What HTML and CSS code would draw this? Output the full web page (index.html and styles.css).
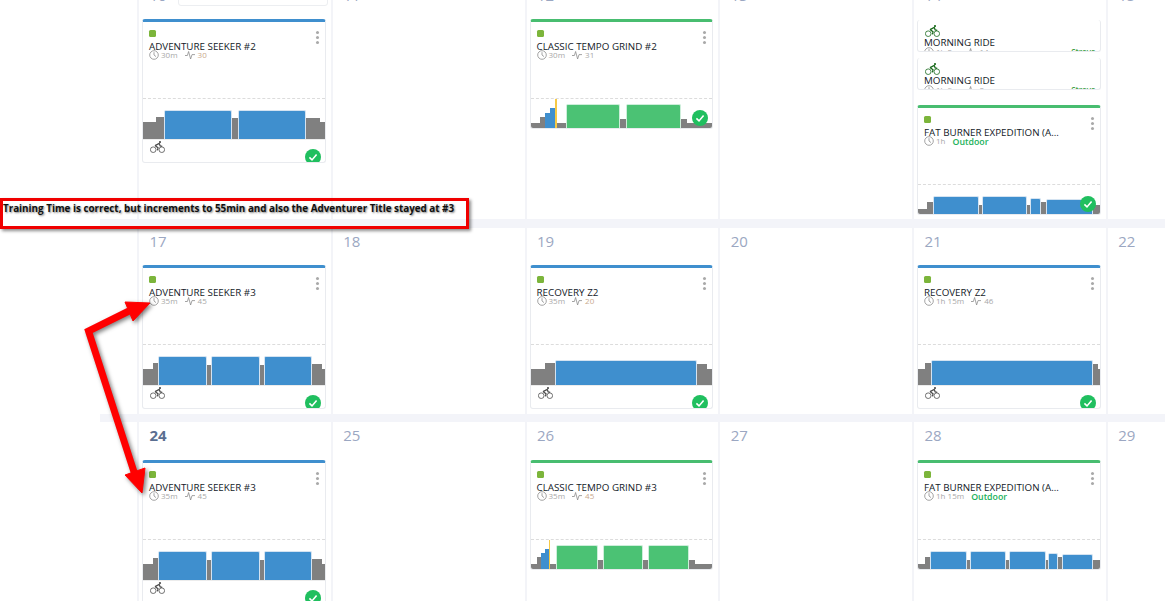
FILE: index.html
```html
<!DOCTYPE html>
<html lang="en">
<head>
    <meta charset="UTF-8">
    <meta name="viewport" content="width=device-width, initial-scale=1.0">
    <title>Training Calendar</title>
    <link rel="stylesheet" href="styles.css">
</head>
<body>
    <svg class="sprite" width="0" height="0">
        <symbol id="clock" viewBox="0 0 10 10">
            <circle cx="5" cy="5" r="4.3" fill="none" stroke="currentColor" stroke-width="0.8"/>
            <path d="M5 2.2V5L7 6.6" fill="none" stroke="currentColor" stroke-width="0.8"/>
        </symbol>
        <symbol id="pulse" viewBox="0 0 10 10">
            <path d="M0 5.5H2.4L3.6 1.5L5.6 9L7 4.6H10" fill="none" stroke="currentColor" stroke-width="0.8"/>
        </symbol>
        <symbol id="bike" viewBox="0 0 15 12">
            <circle cx="3.2" cy="8.7" r="2.8" fill="none" stroke="currentColor" stroke-width="0.8"/>
            <circle cx="11.8" cy="8.7" r="2.8" fill="none" stroke="currentColor" stroke-width="0.8"/>
            <circle cx="10" cy="1.1" r="1.1" fill="currentColor"/>
            <path d="M5 4.6L9.2 2.4L10.2 5L12.2 5.4M5 4.6L8 6.8L7.4 9.4" fill="none" stroke="currentColor" stroke-width="1.3"/>
        </symbol>
        <symbol id="check" viewBox="0 0 16 16">
            <path d="M4.4 8.4L7 10.9L11.6 5.6" fill="none" stroke="#fff" stroke-width="1.6"/>
        </symbol>
    </svg>

    <div class="calendar">
        <!-- week 10-16, scrolled off the top -->
        <div class="week week-first">
            <div class="day">
                <div class="day-head"><span class="date">10</span><div class="slot"></div></div>
                <div class="card card-blue">
                    <span class="dot"></span><span class="kebab"><i></i><i></i><i></i></span>
                    <div class="card-title">Adventure Seeker #2</div>
                    <div class="meta"><svg class="ico"><use href="#clock"/></svg><span class="time">30m</span><svg class="ico"><use href="#pulse"/></svg><span class="tss warm">30</span></div>
                    <div class="chart chart-tall">
                        <b class="bar grey" style="flex:13;height:17px"></b>
                        <b class="bar grey" style="flex:9;height:22px"></b>
                        <b class="bar blue" style="flex:68;height:29px"></b>
                        <b class="bar grey" style="flex:6;height:21px"></b>
                        <b class="bar blue" style="flex:68;height:29px"></b>
                        <b class="bar grey" style="flex:14;height:21px"></b>
                        <b class="bar grey" style="flex:5;height:17px"></b>
                    </div>
                    <svg class="bike"><use href="#bike"/></svg>
                    <span class="done done-low"><svg><use href="#check"/></svg></span>
                </div>
            </div>
            <div class="day"><div class="day-head"><span class="date">11</span></div></div>
            <div class="day">
                <div class="day-head"><span class="date">12</span></div>
                <div class="card card-green">
                    <span class="dot"></span><span class="kebab"><i></i><i></i><i></i></span>
                    <div class="card-title">Classic Tempo Grind #2</div>
                    <div class="meta"><svg class="ico"><use href="#clock"/></svg><span class="time">30m</span><svg class="ico"><use href="#pulse"/></svg><span class="tss">31</span></div>
                    <div class="chart">
                        <b class="bar grey" style="flex:10;height:5px"></b>
                        <b class="bar grey" style="flex:5;height:11px"></b>
                        <b class="bar plain-blue" style="flex:5;height:15px"></b>
                        <b class="bar plain-blue" style="flex:5;height:20px"></b>
                        <b class="bar yellow" style="flex:2;height:29px"></b>
                        <b class="bar grey" style="flex:9;height:5px"></b>
                        <b class="bar green" style="flex:54;height:24px"></b>
                        <b class="bar grey" style="flex:6;height:9px"></b>
                        <b class="bar green" style="flex:54;height:24px"></b>
                        <b class="bar grey" style="flex:6;height:9px"></b>
                        <b class="bar grey" style="flex:26;height:5px"></b>
                    </div>
                    <span class="done"><svg><use href="#check"/></svg></span>
                </div>
            </div>
            <div class="day"><div class="day-head"><span class="date">13</span></div></div>
            <div class="day">
                <div class="day-head day-head-tight"><span class="date">14</span></div>
                <div class="ride">
                    <svg class="bike bike-green"><use href="#bike"/></svg>
                    <div class="ride-title">Morning Ride</div>
                    <div class="meta"><svg class="ico"><use href="#clock"/></svg><span class="time">1h 2m</span><svg class="ico"><use href="#pulse"/></svg><span class="tss">14</span><span class="strava">Strava</span></div>
                </div>
                <div class="ride">
                    <svg class="bike bike-green"><use href="#bike"/></svg>
                    <div class="ride-title">Morning Ride</div>
                    <div class="meta"><svg class="ico"><use href="#clock"/></svg><span class="time">1h 9m</span><svg class="ico"><use href="#pulse"/></svg><span class="tss">0</span><span class="strava">Strava</span></div>
                </div>
                <div class="card card-green card-after-rides">
                    <span class="dot"></span><span class="kebab"><i></i><i></i><i></i></span>
                    <div class="card-title">Fat Burner Expedition (A...</div>
                    <div class="meta"><svg class="ico"><use href="#clock"/></svg><span class="time">1h</span><span class="outdoor">Outdoor</span></div>
                    <div class="chart">
                        <b class="bar grey" style="flex:9;height:5px"></b>
                        <b class="bar grey" style="flex:7;height:12px"></b>
                        <b class="bar blue" style="flex:46;height:18px"></b>
                        <b class="bar grey" style="flex:3;height:9px"></b>
                        <b class="bar blue" style="flex:46;height:18px"></b>
                        <b class="bar grey" style="flex:3;height:9px"></b>
                        <b class="bar blue" style="flex:9;height:16px"></b>
                        <b class="bar grey" style="flex:6;height:12px"></b>
                        <b class="bar blue" style="flex:47;height:15px"></b>
                        <b class="bar grey" style="flex:7;height:9px"></b>
                    </div>
                    <span class="done"><svg><use href="#check"/></svg></span>
                </div>
            </div>
            <div class="day"><div class="day-head"><span class="date">15</span></div></div>
        </div>

        <!-- week 17-22 -->
        <div class="week week-mid">
            <div class="day">
                <div class="day-head"><span class="date">17</span></div>
                <div class="card card-blue">
                    <span class="dot"></span><span class="kebab"><i></i><i></i><i></i></span>
                    <div class="card-title">Adventure Seeker #3</div>
                    <div class="meta"><svg class="ico"><use href="#clock"/></svg><span class="time">35m</span><svg class="ico"><use href="#pulse"/></svg><span class="tss">45</span></div>
                    <div class="chart chart-tall">
                        <b class="bar grey" style="flex:10;height:16px"></b>
                        <b class="bar grey" style="flex:6;height:22px"></b>
                        <b class="bar blue" style="flex:49;height:29px"></b>
                        <b class="bar grey" style="flex:4;height:20px"></b>
                        <b class="bar blue" style="flex:49;height:29px"></b>
                        <b class="bar grey" style="flex:4;height:20px"></b>
                        <b class="bar blue" style="flex:49;height:29px"></b>
                        <b class="bar grey" style="flex:10;height:21px"></b>
                        <b class="bar grey" style="flex:3;height:16px"></b>
                    </div>
                    <svg class="bike"><use href="#bike"/></svg>
                    <span class="done done-low"><svg><use href="#check"/></svg></span>
                </div>
            </div>
            <div class="day"><div class="day-head"><span class="date">18</span></div></div>
            <div class="day">
                <div class="day-head"><span class="date">19</span></div>
                <div class="card card-blue">
                    <span class="dot"></span><span class="kebab"><i></i><i></i><i></i></span>
                    <div class="card-title">Recovery Z2</div>
                    <div class="meta"><svg class="ico"><use href="#clock"/></svg><span class="time">35m</span><svg class="ico"><use href="#pulse"/></svg><span class="tss warm">20</span></div>
                    <div class="chart chart-tall">
                        <b class="bar grey" style="flex:15;height:16px"></b>
                        <b class="bar grey" style="flex:10;height:22px"></b>
                        <b class="bar blue" style="flex:142;height:25px"></b>
                        <b class="bar grey" style="flex:10;height:21px"></b>
                        <b class="bar grey" style="flex:5;height:16px"></b>
                    </div>
                    <svg class="bike"><use href="#bike"/></svg>
                    <span class="done done-low"><svg><use href="#check"/></svg></span>
                </div>
            </div>
            <div class="day"><div class="day-head"><span class="date">20</span></div></div>
            <div class="day">
                <div class="day-head"><span class="date">21</span></div>
                <div class="card card-blue">
                    <span class="dot"></span><span class="kebab"><i></i><i></i><i></i></span>
                    <div class="card-title">Recovery Z2</div>
                    <div class="meta"><svg class="ico"><use href="#clock"/></svg><span class="time">1h 15m</span><svg class="ico"><use href="#pulse"/></svg><span class="tss">46</span></div>
                    <div class="chart chart-tall">
                        <b class="bar grey" style="flex:7;height:16px"></b>
                        <b class="bar grey" style="flex:6;height:22px"></b>
                        <b class="bar blue" style="flex:163;height:25px"></b>
                        <b class="bar grey" style="flex:5;height:21px"></b>
                        <b class="bar grey" style="flex:2;height:16px"></b>
                    </div>
                    <svg class="bike"><use href="#bike"/></svg>
                    <span class="done done-low"><svg><use href="#check"/></svg></span>
                </div>
            </div>
            <div class="day"><div class="day-head"><span class="date">22</span></div></div>
        </div>

        <!-- week 24-29 -->
        <div class="week week-last">
            <div class="day">
                <div class="day-head"><span class="date date-today">24</span></div>
                <div class="card card-blue">
                    <span class="dot"></span><span class="kebab"><i></i><i></i><i></i></span>
                    <div class="card-title">Adventure Seeker #3</div>
                    <div class="meta"><svg class="ico"><use href="#clock"/></svg><span class="time">35m</span><svg class="ico"><use href="#pulse"/></svg><span class="tss">45</span></div>
                    <div class="chart chart-tall">
                        <b class="bar grey" style="flex:10;height:16px"></b>
                        <b class="bar grey" style="flex:6;height:22px"></b>
                        <b class="bar blue" style="flex:49;height:29px"></b>
                        <b class="bar grey" style="flex:4;height:20px"></b>
                        <b class="bar blue" style="flex:49;height:29px"></b>
                        <b class="bar grey" style="flex:4;height:20px"></b>
                        <b class="bar blue" style="flex:49;height:29px"></b>
                        <b class="bar grey" style="flex:10;height:21px"></b>
                        <b class="bar grey" style="flex:3;height:16px"></b>
                    </div>
                    <svg class="bike"><use href="#bike"/></svg>
                    <span class="done done-low"><svg><use href="#check"/></svg></span>
                </div>
            </div>
            <div class="day"><div class="day-head"><span class="date">25</span></div></div>
            <div class="day">
                <div class="day-head"><span class="date">26</span></div>
                <div class="card card-green">
                    <span class="dot"></span><span class="kebab"><i></i><i></i><i></i></span>
                    <div class="card-title">Classic Tempo Grind #3</div>
                    <div class="meta"><svg class="ico"><use href="#clock"/></svg><span class="time">35m</span><svg class="ico"><use href="#pulse"/></svg><span class="tss warm">45</span></div>
                    <div class="chart">
                        <b class="bar grey" style="flex:7;height:5px"></b>
                        <b class="bar grey" style="flex:4;height:12px"></b>
                        <b class="bar plain-blue" style="flex:4;height:16px"></b>
                        <b class="bar plain-blue" style="flex:4;height:20px"></b>
                        <b class="bar yellow" style="flex:1;height:29px"></b>
                        <b class="bar grey" style="flex:7;height:5px"></b>
                        <b class="bar green" style="flex:41;height:24px"></b>
                        <b class="bar grey" style="flex:5;height:9px"></b>
                        <b class="bar green" style="flex:40;height:24px"></b>
                        <b class="bar grey" style="flex:5;height:9px"></b>
                        <b class="bar green" style="flex:41;height:24px"></b>
                        <b class="bar grey" style="flex:6;height:9px"></b>
                        <b class="bar grey" style="flex:18;height:5px"></b>
                    </div>
                </div>
            </div>
            <div class="day"><div class="day-head"><span class="date">27</span></div></div>
            <div class="day">
                <div class="day-head"><span class="date">28</span></div>
                <div class="card card-green">
                    <span class="dot"></span><span class="kebab"><i></i><i></i><i></i></span>
                    <div class="card-title">Fat Burner Expedition (A...</div>
                    <div class="meta"><svg class="ico"><use href="#clock"/></svg><span class="time">1h 15m</span><span class="outdoor">Outdoor</span></div>
                    <div class="chart">
                        <b class="bar grey" style="flex:7;height:5px"></b>
                        <b class="bar grey" style="flex:6;height:12px"></b>
                        <b class="bar blue" style="flex:37;height:18px"></b>
                        <b class="bar grey" style="flex:3;height:9px"></b>
                        <b class="bar blue" style="flex:37;height:18px"></b>
                        <b class="bar grey" style="flex:3;height:9px"></b>
                        <b class="bar blue" style="flex:37;height:18px"></b>
                        <b class="bar grey" style="flex:2;height:9px"></b>
                        <b class="bar blue" style="flex:9;height:16px"></b>
                        <b class="bar grey" style="flex:4;height:12px"></b>
                        <b class="bar blue" style="flex:31;height:15px"></b>
                        <b class="bar grey" style="flex:7;height:9px"></b>
                    </div>
                </div>
            </div>
            <div class="day"><div class="day-head"><span class="date">29</span></div></div>
        </div>
    </div>

    <!-- annotations drawn over the screenshot -->
    <div class="callout">Training Time is correct, but increments to 55min and also the Adventurer Title stayed at #3</div>
    <svg class="arrows" width="200" height="220" viewBox="0 0 200 220">
        <path d="M79 11L38.5 31L85 175" fill="none" stroke="#f00" stroke-width="7" stroke-linejoin="miter" stroke-miterlimit="10"/>
        <path d="M100 3L75 2L83 21Z M92 193L75 175L95 168Z" fill="#f00" stroke="#f00" stroke-width="1"/>
    </svg>
</body>
</html>
```

FILE: styles.css
```css
html, body {
    height: 100%;
}
body {
    font-family: "Open Sans", Arial, sans-serif;
    background-color: #fff;
    margin: 0;
    overflow: hidden;
    position: relative;
}
.sprite {
    position: absolute;
}

/* calendar grid */
.calendar {
    background-color: #f3f4f9;
    margin: -18px 0 0 100px;
    height: 640px;
}
.week {
    display: grid;
    grid-template-columns: repeat(5, 193.75px) 1fr;
    background-color: #fff;
    padding-left: 37px;
    height: 220px;
}
.week-first {
    height: 237px;
    margin-bottom: 9px;
}
.week-mid {
    height: 186px;
    margin-bottom: 8px;
}
.day {
    border-left: 2px solid #f3f4f8;
    padding: 0 5px 0 3px;
    min-width: 0;
}
.day-head {
    display: flex;
    justify-content: space-between;
    align-items: flex-start;
    height: 37px;
    padding-left: 7.5px;
}
.day-head-tight, .week-last .day-head {
    height: 38px;
}
.date {
    font-size: 15px;
    line-height: 26px;
    color: #9ba7c2;
}
.date-today {
    font-weight: 700;
    color: #5b6f91;
}
.slot {
    width: 150px;
    height: 24px;
    box-sizing: border-box;
    border: 1px solid #eceef1;
    border-radius: 3px;
    margin-right: -2px;
}

/* workout card */
.card {
    position: relative;
    box-sizing: border-box;
    background-color: #fff;
    border: 1px solid #e9ebef;
    border-top: 3px solid #3f8fce;
    border-radius: 3px;
    overflow: hidden;
    padding-top: 76px;
}
.card-green {
    border-top-color: #48bd70;
}
.card-after-rides {
    margin-top: 15px;
}
.dot {
    position: absolute;
    top: 8px;
    left: 6px;
    width: 7px;
    height: 7px;
    border-radius: 1.5px;
    background-color: #7cb53b;
}
.kebab {
    position: absolute;
    top: 9px;
    right: 6px;
    display: flex;
    flex-direction: column;
    gap: 2px;
}
.kebab i {
    width: 3px;
    height: 3px;
    border-radius: 50%;
    background-color: #a9a9a9;
}
.card-title {
    position: absolute;
    top: 19px;
    left: 6px;
    font-size: 9.8px;
    line-height: 12px;
    text-transform: uppercase;
    color: #141a28;
    white-space: nowrap;
}
.meta {
    position: absolute;
    top: 28px;
    left: 6px;
    right: 4px;
    display: flex;
    align-items: center;
    height: 10px;
    font-size: 8px;
    line-height: 10px;
    color: #a8a8a8;
}
.ico {
    width: 10px;
    height: 10px;
    color: #8d8d8d;
    flex: none;
}
.time {
    margin: 0 7px 0 2px;
}
.tss {
    margin-left: 3px;
}
.warm {
    color: #c9a98c;
}
.outdoor {
    margin: 2px 0 0 0;
    font-size: 8.8px;
    font-weight: 600;
    color: #21b15a;
}
.strava {
    margin-left: auto;
    font-weight: 600;
    color: #43a047;
}

/* interval chart */
.chart {
    display: flex;
    align-items: flex-end;
    height: 29px;
    border-top: 1px dashed #dcdcdc;
}
.chart-tall {
    height: 40px;
    border-bottom: 1px solid #ececec;
}
.bar {
    display: block;
    flex-basis: 0;
    min-width: 0;
    box-sizing: border-box;
}
.grey {
    background-color: #808080;
}
.blue, .green {
    border: 1px solid #d4e3f1;
    border-bottom: 0;
    border-radius: 2px 2px 0 0;
}
.blue {
    background-color: #3f8fce;
}
.green {
    background-color: #4bc274;
    border-color: #cdeeda;
}
.plain-blue {
    background-color: #3f8fce;
}
.yellow {
    background-color: #f6c945;
}
.bike {
    display: block;
    width: 15px;
    height: 12px;
    margin: 1px 0 9px 7px;
    color: #4f4f4f;
}
.bike-green {
    color: #1c6b1f;
    margin: 0 0 0 7px;
}
.done {
    position: absolute;
    right: 4px;
    bottom: 2px;
    width: 16px;
    height: 16px;
    border-radius: 50%;
    background-color: #20bf5f;
}
.done svg {
    display: block;
    width: 16px;
    height: 16px;
}
.done-low {
    bottom: -3px;
}

/* synced rides, cut off by their fixed height */
.ride {
    position: relative;
    box-sizing: border-box;
    height: 32px;
    margin-bottom: 6px;
    padding-top: 5px;
    border: 1px solid #e9ebef;
    border-top: 0;
    border-radius: 3px;
    overflow: hidden;
}
.ride-title {
    font-size: 9.8px;
    line-height: 11px;
    margin: 0 0 0 6px;
    text-transform: uppercase;
    color: #141a28;
}
.ride .meta {
    top: 27px;
}

/* annotations */
.callout {
    position: absolute;
    top: 198px;
    left: 0;
    width: 469px;
    height: 31px;
    box-sizing: border-box;
    border: 3px solid #f00000;
    box-shadow: 2px 2px 3px rgba(0, 0, 0, 0.45);
    font-size: 9.85px;
    font-weight: 700;
    line-height: 14px;
    color: #111;
    text-shadow: 1px 1px 2px rgba(0, 0, 0, 0.5);
    white-space: nowrap;
}
.arrows {
    position: absolute;
    top: 300px;
    left: 50px;
    filter: drop-shadow(2px 2px 2px rgba(0, 0, 0, 0.5));
}
```
